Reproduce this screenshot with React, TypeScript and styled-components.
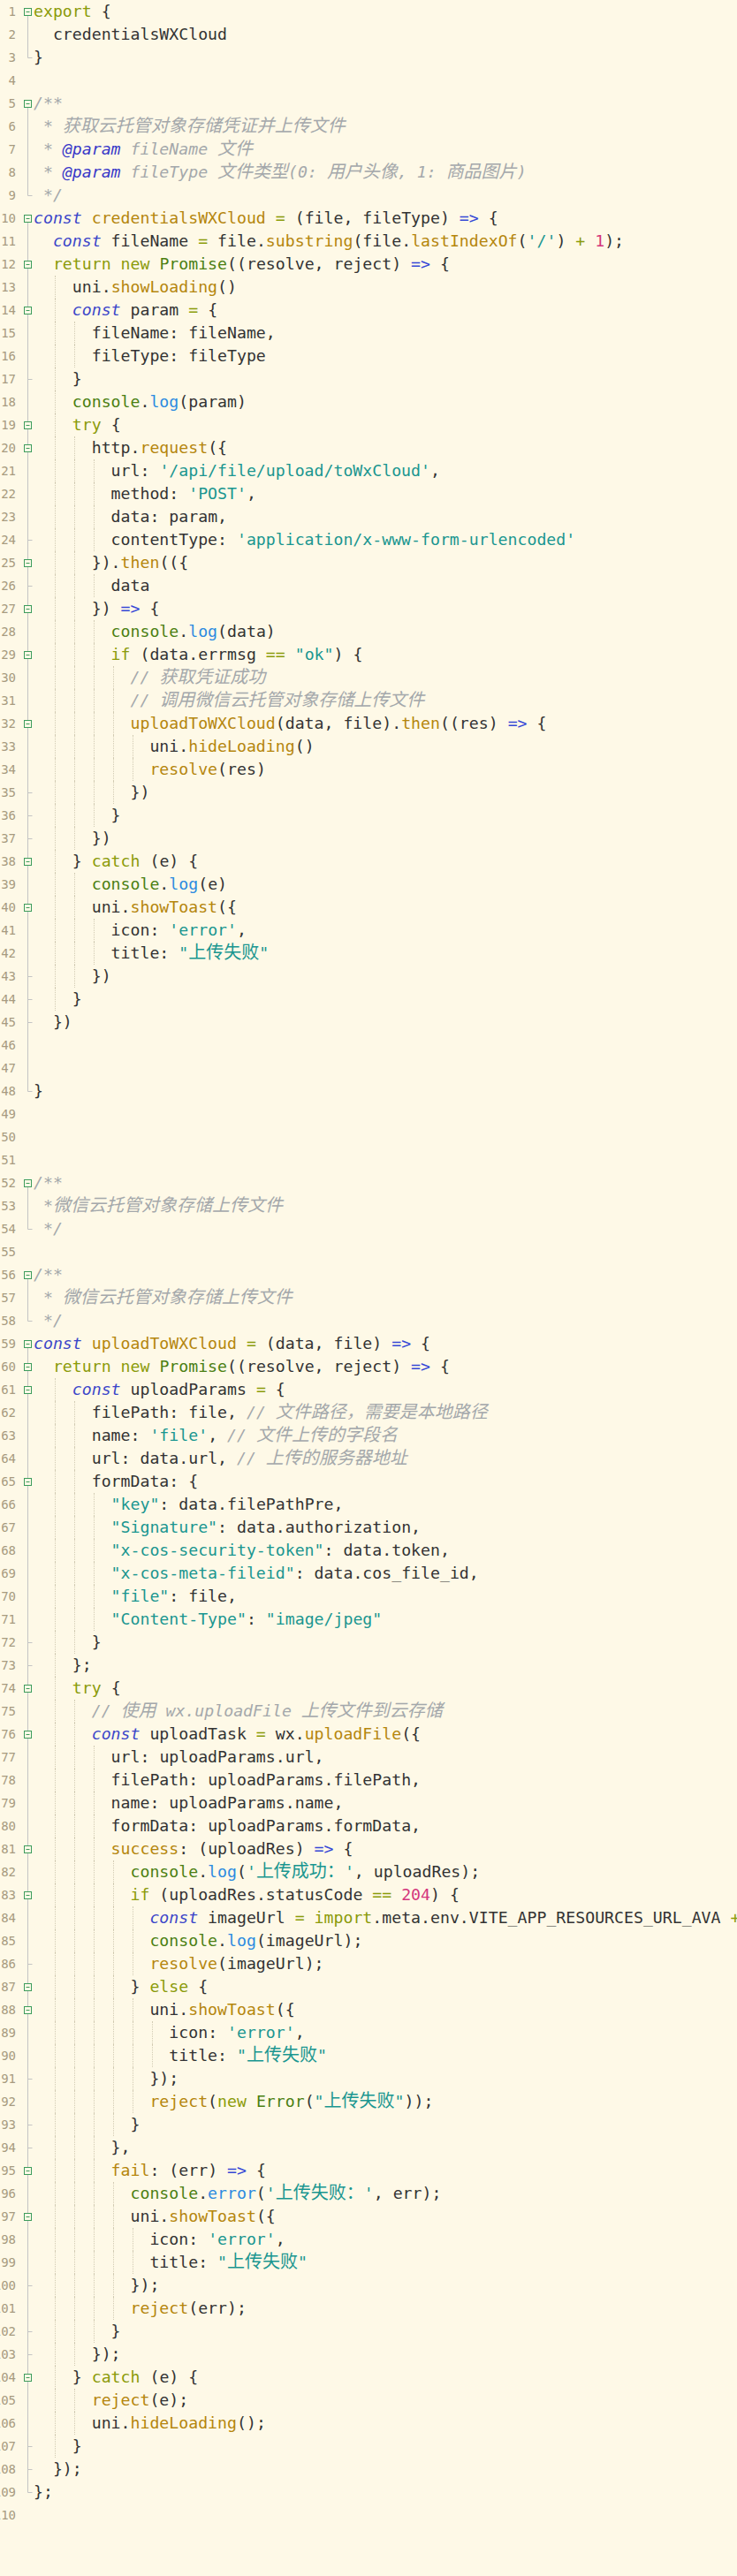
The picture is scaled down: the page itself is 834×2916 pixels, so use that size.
import React from 'react'
import styled, { createGlobalStyle } from 'styled-components'

const LINES: string[] = [
  'export {',
  '  credentialsWXCloud',
  '}',
  '',
  '/**',
  ' * 获取云托管对象存储凭证并上传文件',
  ' * @param fileName 文件',
  ' * @param fileType 文件类型(0: 用户头像, 1: 商品图片)',
  ' */',
  'const credentialsWXCloud = (file, fileType) => {',
  "  const fileName = file.substring(file.lastIndexOf('/') + 1);",
  '  return new Promise((resolve, reject) => {',
  '    uni.showLoading()',
  '    const param = {',
  '      fileName: fileName,',
  '      fileType: fileType',
  '    }',
  '    console.log(param)',
  '    try {',
  '      http.request({',
  "        url: '/api/file/upload/toWxCloud',",
  "        method: 'POST',",
  '        data: param,',
  "        contentType: 'application/x-www-form-urlencoded'",
  '      }).then(({',
  '        data',
  '      }) => {',
  '        console.log(data)',
  '        if (data.errmsg == "ok") {',
  '          // 获取凭证成功',
  '          // 调用微信云托管对象存储上传文件',
  '          uploadToWXCloud(data, file).then((res) => {',
  '            uni.hideLoading()',
  '            resolve(res)',
  '          })',
  '        }',
  '      })',
  '    } catch (e) {',
  '      console.log(e)',
  '      uni.showToast({',
  "        icon: 'error',",
  '        title: "上传失败"',
  '      })',
  '    }',
  '  })',
  '',
  '',
  '}',
  '',
  '',
  '',
  '/**',
  ' *微信云托管对象存储上传文件',
  ' */',
  '',
  '/**',
  ' * 微信云托管对象存储上传文件',
  ' */',
  'const uploadToWXCloud = (data, file) => {',
  '  return new Promise((resolve, reject) => {',
  '    const uploadParams = {',
  '      filePath: file, // 文件路径，需要是本地路径',
  "      name: 'file', // 文件上传的字段名",
  '      url: data.url, // 上传的服务器地址',
  '      formData: {',
  '        "key": data.filePathPre,',
  '        "Signature": data.authorization,',
  '        "x-cos-security-token": data.token,',
  '        "x-cos-meta-fileid": data.cos_file_id,',
  '        "file": file,',
  '        "Content-Type": "image/jpeg"',
  '      }',
  '    };',
  '    try {',
  '      // 使用 wx.uploadFile 上传文件到云存储',
  '      const uploadTask = wx.uploadFile({',
  '        url: uploadParams.url,',
  '        filePath: uploadParams.filePath,',
  '        name: uploadParams.name,',
  '        formData: uploadParams.formData,',
  '        success: (uploadRes) => {',
  "          console.log('上传成功：', uploadRes);",
  '          if (uploadRes.statusCode == 204) {',
  '            const imageUrl = import.meta.env.VITE_APP_RESOURCES_URL_AVA + uploadParams.formData.key;',
  '            console.log(imageUrl);',
  '            resolve(imageUrl);',
  '          } else {',
  '            uni.showToast({',
  "              icon: 'error',",
  '              title: "上传失败"',
  '            });',
  '            reject(new Error("上传失败"));',
  '          }',
  '        },',
  '        fail: (err) => {',
  "          console.error('上传失败：', err);",
  '          uni.showToast({',
  "            icon: 'error',",
  '            title: "上传失败"',
  '          });',
  '          reject(err);',
  '        }',
  '      });',
  '    } catch (e) {',
  '      reject(e);',
  '      uni.hideLoading();',
  '    }',
  '  });',
  '};',
  '',
]

// gutter fold markers
const BOXES = [1, 5, 10, 12, 14, 19, 20, 25, 27, 29, 32, 38, 40, 52, 56, 59, 60, 61, 65, 74, 76, 81, 83, 87, 88, 95, 97, 104]
const OUTER = [[1, 3], [5, 9], [10, 48], [52, 54], [56, 58], [59, 109]]
const TICKS = [17, 24, 26, 35, 36, 37, 43, 44, 45, 72, 73, 86, 91, 93, 94, 100, 102, 103, 107, 108]

type Mark = 'none' | 'box' | 'boxTop' | 'vert' | 'tick' | 'end'

function markFor(n: number): Mark {
  const outer = OUTER.find(([a, b]) => n >= a && n <= b)
  if (!outer) return 'none'
  if (outer[0] === n) return 'boxTop'
  if (outer[1] === n) return 'end'
  if (BOXES.includes(n)) return 'box'
  if (TICKS.includes(n)) return 'tick'
  return 'vert'
}

type Kind = 'plain' | 'kw' | 'decl' | 'cls' | 'fn' | 'builtin' | 'str' | 'num' | 'op' | 'arrow' | 'comment' | 'tag'

const COLORS: Record<Kind, string> = {
  plain: '#333333',
  kw: '#8b9b0a',
  decl: '#3b46c9',
  cls: '#4b7f12',
  fn: '#b5860d',
  builtin: '#2c8be0',
  str: '#1a9690',
  num: '#d4357d',
  op: '#8b9b0a',
  arrow: '#3548d6',
  comment: '#a4a8ab',
  tag: '#3838c8',
}

const KW = new Set(['export', 'return', 'new', 'try', 'catch', 'if', 'else', 'import'])
const CLS = new Set(['Promise', 'Error', 'console'])

type Tok = { kind: Kind; text: string }

function tokenize(line: string): Tok[] {
  const t = line.trimStart()
  if (t.startsWith('/**') || t.startsWith('*')) {
    return line
      .split(/(@param)/)
      .filter(Boolean)
      .map((s) => ({ kind: s === '@param' ? 'tag' : 'comment', text: s }))
  }
  const out: Tok[] = []
  const re = /(\/\/.*$)|('[^']*'|"[^"]*")|(\b\d+\b)|([A-Za-z_$][\w$]*)|(=>)|(==|=|\+)|(\s+)|(.)/g
  let m: RegExpExecArray | null
  while ((m = re.exec(line))) {
    const text = m[0]
    const rest = line.slice(re.lastIndex)
    let kind: Kind = 'plain'
    if (m[1]) kind = 'comment'
    else if (m[2]) kind = 'str'
    else if (m[3]) kind = 'num'
    else if (m[4]) {
      if (text === 'const') kind = 'decl'
      else if (KW.has(text)) kind = 'kw'
      else if (CLS.has(text)) kind = 'cls'
      else if (/console\.$/.test(line.slice(0, m.index))) kind = 'builtin'
      else if (/^\(/.test(rest) || /^\s*(=|:)\s*\(/.test(rest)) kind = 'fn'
    } else if (m[5]) kind = 'arrow'
    else if (m[6]) kind = 'op'
    out.push({ kind, text })
  }
  return out
}

const GlobalStyle = createGlobalStyle`
  html, body {
    margin: 0;
    padding: 0;
    background: #fef9e7;
    overflow-x: hidden;
  }
`

const Editor = styled.div`
  width: 834px;
  min-height: 2916px;
  background: #fef9e7;
  overflow: hidden;
`

const Row = styled.div`
  display: flex;
  height: 26px;
`

const LineNo = styled.div`
  flex: none;
  width: 18px;
  display: flex;
  justify-content: flex-end;
  font-family: "DejaVu Sans Mono", monospace;
  font-size: 14px;
  line-height: 26px;
  color: #a79b80;
  white-space: nowrap;
`

const FoldCell = styled.div`
  flex: none;
  width: 20px;
  height: 26px;
`

const Code = styled.div`
  flex: 1;
  position: relative;
  white-space: pre;
  font-family: "DejaVu Sans Mono", "Noto Sans CJK SC", monospace;
  font-size: 18.2px;
  line-height: 26px;
  color: #333333;
`

const Guide = styled.span<{ $left: number }>`
  position: absolute;
  top: 0;
  bottom: 0;
  left: ${(p) => p.$left}px;
  border-left: 1px dotted #d2cbb3;
`

const Token = styled.span<{ $kind: Kind }>`
  color: ${(p) => COLORS[p.$kind]};
  font-style: ${(p) => (['comment', 'tag', 'decl'].includes(p.$kind) ? 'italic' : 'normal')};
`

const Cjk = styled.span`
  font-family: "Noto Sans CJK SC", sans-serif;
  font-size: 20px;
  line-height: 1;
`

function FoldMark({ mark }: { mark: Mark }) {
  const line = '#c4c4c4'
  const green = '#3d9c5c'
  if (mark === 'none') return null
  return (
    <svg width="20" height="26" viewBox="0 0 20 26">
      {(mark === 'box' || mark === 'boxTop') && (
        <>
          {mark === 'box' && <line x1="13.5" y1="0" x2="13.5" y2="9" stroke={line} />}
          <line x1="13.5" y1="18" x2="13.5" y2="26" stroke={line} />
          <rect x="9.5" y="9.5" width="8" height="8" fill="none" stroke={green} />
          <line x1="11.5" y1="13.5" x2="15.5" y2="13.5" stroke={green} />
        </>
      )}
      {(mark === 'vert' || mark === 'tick') && <line x1="13.5" y1="0" x2="13.5" y2="26" stroke={line} />}
      {mark === 'tick' && <line x1="13.5" y1="13.5" x2="18.5" y2="13.5" stroke={line} />}
      {mark === 'end' && (
        <>
          <line x1="13.5" y1="0" x2="13.5" y2="13.5" stroke={line} />
          <line x1="13.5" y1="13.5" x2="18.5" y2="13.5" stroke={line} />
        </>
      )}
    </svg>
  )
}

function renderText(text: string) {
  return text
    .split(/([\u3000-\u303f\u4e00-\u9fff\uff00-\uffef]+)/)
    .filter(Boolean)
    .map((part, i) => (/[\u3000-\u303f\u4e00-\u9fff\uff00-\uffef]/.test(part) ? <Cjk key={i}>{part}</Cjk> : part))
}

const CELL = 10.96

function CodeLine({ text }: { text: string }) {
  const spaces = text.length - text.trimStart().length
  const level = text.trim() ? Math.floor(spaces / 2) : 0
  const guides = []
  for (let l = 1; l < level; l++) guides.push(<Guide key={'g' + l} $left={Math.round(l * 2 * CELL + 2)} />)
  return (
    <Code>
      {guides}
      {tokenize(text).map((t, i) => (
        <Token key={i} $kind={t.kind}>
          {renderText(t.text)}
        </Token>
      ))}
    </Code>
  )
}

export default function App() {
  return (
    <>
      <GlobalStyle />
      <Editor>
        {LINES.map((text, i) => (
          <Row key={i}>
            <LineNo>{i + 1}</LineNo>
            <FoldCell>
              <FoldMark mark={markFor(i + 1)} />
            </FoldCell>
            <CodeLine text={text} />
          </Row>
        ))}
      </Editor>
    </>
  )
}
